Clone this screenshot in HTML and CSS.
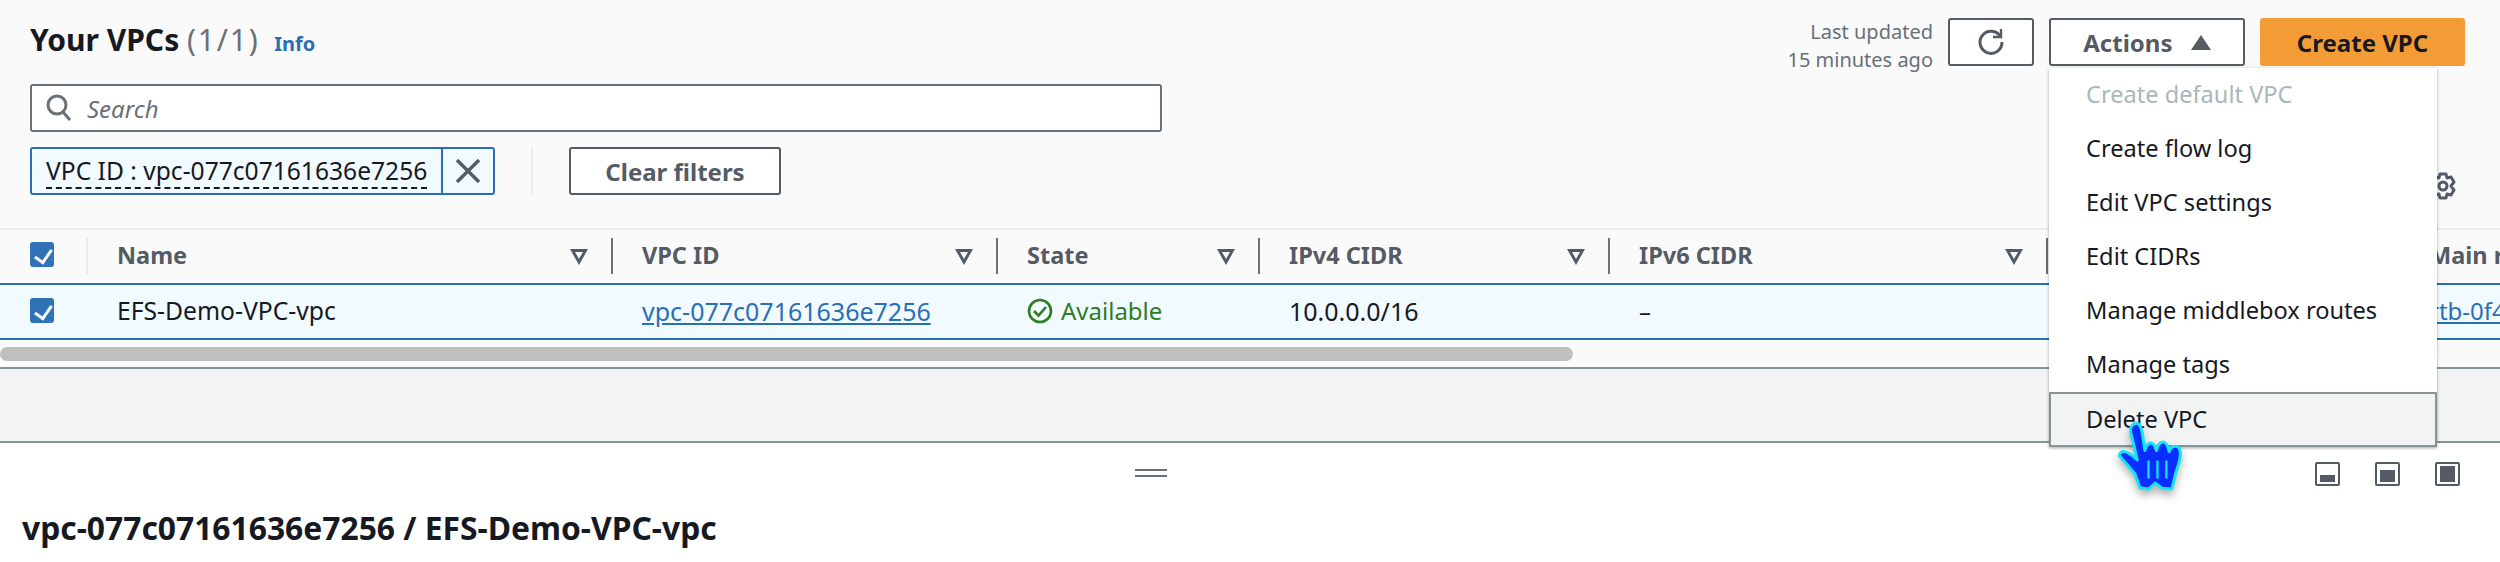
FILE: index.html
```html
<!DOCTYPE html>
<html lang="en">
  <head>
    <meta charset="UTF-8" />
    <title>Your VPCs</title>
    <link rel="stylesheet" href="styles.css">
  </head>
  <body>
    <div class="page">
      <section class="top-panel">
        <div class="head-row">
          <h1 class="title">Your VPCs <span class="count">(1/1)</span> <a class="info">Info</a></h1>
          <div class="head-actions">
            <div class="updated">Last updated<br>15 minutes ago</div>
            <button class="btn btn-refresh">
              <svg width="30" height="30" viewBox="0 0 30 30" fill="none" stroke="#545b64" stroke-width="3">
                <path d="M24 9A11 11 0 1 0 26 15" />
                <path d="M25 2v8h-8" stroke-width="2.4" />
              </svg>
            </button>
            <button class="btn btn-actions">Actions <span class="caret"></span></button>
            <button class="btn btn-primary">Create VPC</button>
          </div>
        </div>

        <div class="search-box">
          <svg width="26" height="28" viewBox="0 0 26 28" fill="none" stroke="#687078" stroke-width="3">
            <circle cx="11" cy="11" r="9" />
            <path d="M17 18l7 8" />
          </svg>
          <span class="search-text">Search</span>
        </div>

        <div class="filter-row">
          <div class="token">
            <div class="token-body"><span class="token-text">VPC ID : vpc-077c07161636e7256</span></div>
            <span class="token-close">
              <svg width="24" height="24" viewBox="0 0 24 24" stroke="#545b64" stroke-width="3.4">
                <path d="M1 1l22 22M23 1L1 23" />
              </svg>
            </span>
          </div>
          <div class="filter-divider"></div>
          <button class="btn btn-clear">Clear filters</button>
        </div>

        <div class="vpc-table">
          <div class="cell cell-head cell-check"><span class="checkbox"></span></div>
          <div class="cell cell-head">Name<span class="sort"></span></div>
          <div class="cell cell-head">VPC ID<span class="sort"></span></div>
          <div class="cell cell-head">State<span class="sort"></span></div>
          <div class="cell cell-head">IPv4 CIDR<span class="sort"></span></div>
          <div class="cell cell-head">IPv6 CIDR<span class="sort"></span></div>
          <div class="cell cell-head"></div>
          <div class="cell cell-head cell-last">Main route table</div>

          <div class="cell cell-row cell-check"><span class="checkbox"></span></div>
          <div class="cell cell-row cell-name">EFS-Demo-VPC-vpc</div>
          <div class="cell cell-row cell-num"><a class="link">vpc-077c07161636e7256</a></div>
          <div class="cell cell-row status">
            <svg width="26" height="26" viewBox="0 0 26 26" fill="none" stroke="#2e7d1f" stroke-width="2.6">
              <circle cx="13" cy="13" r="11" />
              <path d="M7 13l4.5 4.5L19 9" />
            </svg>
            Available
          </div>
          <div class="cell cell-row cell-num">10.0.0.0/16</div>
          <div class="cell cell-row">–</div>
          <div class="cell cell-row"></div>
          <div class="cell cell-row cell-last"><a class="link">rtb-0f4</a></div>
        </div>

        <div class="scroll-track"><div class="scroll-thumb"></div></div>
      </section>

      <div class="band"></div>

      <section class="detail-panel">
        <div class="handle"></div>
        <div class="split-icons">
          <span class="split-icon"><span class="split-fill fill-low"></span></span>
          <span class="split-icon"><span class="split-fill fill-mid"></span></span>
          <span class="split-icon"><span class="split-fill fill-full"></span></span>
        </div>
        <h2 class="detail-title">vpc-077c07161636e7256 / EFS-Demo-VPC-vpc</h2>
      </section>

      <svg class="gear" width="30" height="30" viewBox="0 0 30 30" fill="none" stroke="#545b64" stroke-width="3">
        <circle cx="15" cy="15" r="4" />
        <path d="M12 3h6l1 4 4-1 3 5-3 4 3 4-3 5-4-1-1 4h-6l-1-4-4 1-3-5 3-4-3-4 3-5 4 1z" stroke-linejoin="round" />
      </svg>

      <ul class="menu">
        <li class="menu-item disabled">Create default VPC</li>
        <li class="menu-item">Create flow log</li>
        <li class="menu-item">Edit VPC settings</li>
        <li class="menu-item">Edit CIDRs</li>
        <li class="menu-item">Manage middlebox routes</li>
        <li class="menu-item">Manage tags</li>
        <li class="menu-item hover">Delete VPC</li>
      </ul>

      <svg class="cursor" width="68" height="73" viewBox="225 90 205 220">
        <path d="M290 100C300 100 305 115 308 135L315 182C320 160 340 145 350 182C358 150 380 145 388 185C395 165 420 160 422 190C422 215 412 235 408 250L396 298L368 296L346 280L326 298L300 294L285 252L238 198C240 182 255 175 292 210L272 125C270 110 278 100 290 100Z"
          fill="#0a2eff" stroke="#12e6f5" stroke-width="9" stroke-linejoin="round" />
        <path d="M326 212v54M353 212v54M380 212v54" stroke="#12e6f5" stroke-width="7" />
      </svg>
    </div>
  </body>
</html>
```

FILE: styles.css
```css
* {
  box-sizing: border-box;
}
html,
body {
  margin: 0;
  height: 100%;
}
body {
  font-family: "Noto Sans", "Open Sans", sans-serif;
  font-size: 24px;
  color: #16191f;
  background: #fff;
  overflow: hidden;
}
.page {
  position: relative;
  width: 2500px;
  height: 562px;
  overflow: hidden;
}

/* top part */
.top-panel {
  height: 367px;
  background: #fafafa;
  padding-top: 18px;
}
.head-row {
  display: flex;
  justify-content: space-between;
  height: 48px;
  padding: 0 35px 0 30px;
}
.title {
  margin: 3px 0 0;
  font-size: 30px;
  font-weight: 700;
  line-height: 38px;
}
.count {
  font-weight: 400;
  color: #687078;
  letter-spacing: 1.8px;
}
.info {
  margin-left: 7px;
  font-size: 20px;
  font-weight: 700;
  color: #2a6fb5;
}
.head-actions {
  display: flex;
  gap: 15px;
}
.updated {
  font-size: 20px;
  line-height: 28px;
  color: #687078;
  text-align: right;
}
.btn {
  height: 48px;
  border: 2px solid #545b64;
  border-radius: 3px;
  background: #fff;
  color: #545b64;
  font: 700 24px "Noto Sans", sans-serif;
  padding: 0;
}
.btn-refresh {
  width: 86px;
  display: flex;
  align-items: center;
  justify-content: center;
}
.btn-actions {
  width: 196px;
}
.caret {
  display: inline-block;
  margin-left: 12px;
  border-left: 10px solid transparent;
  border-right: 10px solid transparent;
  border-bottom: 15px solid #545b64;
  vertical-align: 2px;
}
.btn-primary {
  width: 205px;
  background: #f39c36;
  border-color: #f39c36;
  color: #16191f;
}

.search-box {
  display: flex;
  align-items: center;
  gap: 15px;
  width: 1132px;
  height: 48px;
  margin: 18px 0 0 30px;
  padding-left: 14px;
  background: #fff;
  border: 2px solid #687078;
  border-radius: 3px;
}
.search-text {
  font-style: italic;
  color: #687078;
}

.filter-row {
  display: flex;
  align-items: center;
  height: 48px;
  margin: 15px 0 0 30px;
}
.token {
  display: flex;
  width: 465px;
  height: 48px;
  background: #f1faff;
  border: 2px solid #2a6fb5;
  border-radius: 3px;
}
.token-body {
  flex: 1;
  padding: 5px 0 0 14px;
  white-space: nowrap;
  overflow: hidden;
}
.token-text {
  display: inline-block;
  font-size: 24.6px;
  line-height: 32px;
  border-bottom: 2px dashed #16191f;
}
.token-close {
  display: flex;
  align-items: center;
  justify-content: center;
  width: 52px;
  border-left: 2px solid #2a6fb5;
}
.filter-divider {
  width: 2px;
  height: 48px;
  margin: 0 36px;
  background: #eaeded;
}
.btn-clear {
  width: 212px;
}

/* table */
.vpc-table {
  display: grid;
  grid-template-columns: 88px 525px 385px 262px 350px 438px 352px 100px;
  grid-template-rows: 55px 55px;
  margin-top: 33px;
  border-top: 2px solid #eaeded;
}
.cell {
  display: flex;
  align-items: center;
  position: relative;
  padding-left: 29px;
  white-space: nowrap;
  overflow: hidden;
}
.cell-check {
  padding-left: 30px;
}
.cell-head {
  font-size: 23.5px;
  font-weight: 700;
  color: #545b64;
  border-bottom: 2px solid #2a6fb5;
  padding-bottom: 4px;
}
.cell-head::after {
  content: "";
  position: absolute;
  right: 0;
  top: 8px;
  width: 2px;
  height: 36px;
  background: #687078;
}
.cell-check::after {
  background: #eaeded;
}
.cell-last::after {
  display: none;
}
.cell-row {
  background: #f1faff;
  border-bottom: 2px solid #2a6fb5;
  padding-bottom: 2px;
}
.cell-name {
  font-size: 24.7px;
}
.cell-num {
  font-size: 25px;
}
.sort {
  position: absolute;
  right: 25px;
  top: 19px;
  width: 0;
  height: 0;
  border-left: 9px solid transparent;
  border-right: 9px solid transparent;
  border-top: 16px solid #545b64;
}
.sort::after {
  content: "";
  position: absolute;
  left: -4px;
  top: -13px;
  border-left: 4px solid transparent;
  border-right: 4px solid transparent;
  border-top: 7px solid #fafafa;
}
.checkbox {
  position: relative;
  display: block;
  width: 24px;
  height: 25px;
  background: #2f72b8;
  border-radius: 3px;
}
.checkbox::after {
  content: "";
  position: absolute;
  left: 8px;
  top: 4px;
  width: 8px;
  height: 14px;
  border-right: 3px solid #fff;
  border-bottom: 3px solid #fff;
  transform: rotate(35deg);
}
.link {
  color: #2a6fb5;
  text-decoration: underline;
}
.status {
  gap: 8px;
  color: #2e7d1f;
}
.scroll-track {
  height: 27px;
  padding-top: 7px;
}
.scroll-thumb {
  width: 1573px;
  height: 14px;
  background: #bfbfbf;
  border-radius: 7px;
}

/* grey band + lower panel */
.band {
  height: 76px;
  background: #f2f3f3;
  border-top: 2px solid #879596;
  border-bottom: 2px solid #879596;
}
.detail-panel {
  position: relative;
  height: 119px;
  padding: 66px 0 0 22px;
  background: #fff;
}
.handle {
  position: absolute;
  top: 26px;
  left: 1135px;
  width: 32px;
  height: 8px;
  border-top: 2px solid #687078;
  border-bottom: 2px solid #687078;
}
.split-icons {
  position: absolute;
  top: 19px;
  right: 40px;
  display: flex;
  gap: 35px;
}
.split-icon {
  display: flex;
  align-items: flex-end;
  width: 25px;
  height: 24px;
  padding: 2px 3px;
  border: 2px solid #545b64;
  border-radius: 2px;
}
.split-fill {
  display: block;
  width: 100%;
  background: #545b64;
}
.fill-low {
  height: 7px;
}
.fill-mid {
  height: 12px;
}
.fill-full {
  height: 100%;
}
.detail-title {
  margin: 0;
  font-size: 31.8px;
  font-weight: 700;
  line-height: 38px;
}

/* things lying over the page */
.gear {
  position: absolute;
  left: 2428px;
  top: 171px;
}
.menu {
  position: absolute;
  left: 2049px;
  top: 68px;
  width: 388px;
  margin: 0;
  padding: 0;
  list-style: none;
  font-size: 23.6px;
  background: #fff;
  box-shadow: 0 1px 3px rgba(0, 0, 0, 0.35);
}
.menu-item {
  height: 54px;
  line-height: 52px;
  padding-left: 37px;
}
.disabled {
  color: #aab7b8;
}
.hover {
  height: 55px;
  background: #f2f3f3;
  border: 2px solid #879596;
  padding-left: 35px;
  line-height: 50px;
}
.cursor {
  position: absolute;
  left: 2115px;
  top: 420px;
  filter: drop-shadow(0 5px 4px rgba(0, 0, 0, 0.3));
}
```
